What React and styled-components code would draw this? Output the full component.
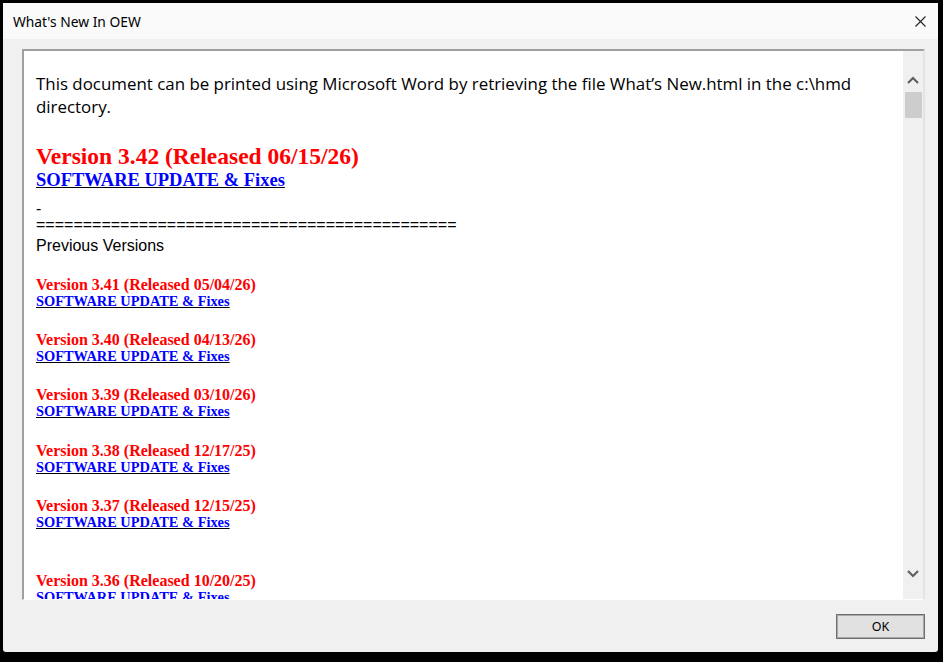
import React from 'react';
import styled, { createGlobalStyle } from 'styled-components';

const GlobalStyle = createGlobalStyle`
  html, body {
    margin: 0;
    padding: 0;
    background: #000;
  }
  #root {
    width: 943px;
    height: 662px;
  }
`;

const Frame = styled.div`
  width: 943px;
  height: 662px;
  box-sizing: border-box;
  padding: 3px 5px 10px 3px;
  background: #000;
  display: flex;
`;

const Window = styled.div`
  flex: 1;
  display: flex;
  flex-direction: column;
  background: #f0f0f0;
  border-radius: 0 0 3px 3px;
  overflow: hidden;
`;

const TitleBar = styled.div`
  height: 36px;
  display: flex;
  align-items: center;
  justify-content: space-between;
  padding: 0 12px 0 10px;
  background: #fafafa;
  font-family: "Noto Sans", "Open Sans", sans-serif;
  font-size: 13.8px;
  color: #000;
`;

const CloseButton = styled.button`
  border: none;
  background: none;
  padding: 0;
  width: 12px;
  height: 12px;
  display: flex;
  align-items: center;
  justify-content: center;
`;

const Body = styled.div`
  flex: 1;
  display: flex;
  flex-direction: column;
  padding: 10px 13px 0 19px;
  min-height: 0;
`;

const Panel = styled.div`
  height: 551px;
  display: flex;
  box-sizing: border-box;
  border-style: solid;
  border-width: 2px 2px 1px 2px;
  border-color: #a0a0a0 #e3e3e3 #fdfdfd #a0a0a0;
  background: #fff;
  overflow: hidden;
`;

const Content = styled.div`
  flex: 1;
  overflow: hidden;
  padding: 21px 12px 0 12px;
`;

const Intro = styled.p`
  margin: 0;
  font-family: "Open Sans", sans-serif;
  font-size: 16.9px;
  line-height: 23px;
  color: #000;
`;

const Version = styled.div`
  font-family: "Liberation Serif", serif;
  font-weight: bold;
  color: #ff0000;
  font-size: ${p => (p.big ? '23.5px' : '16px')};
  line-height: ${p => (p.big ? '26px' : '17px')};
  margin-top: ${p => p.gap}px;
`;

const UpdateLink = styled.a`
  display: block;
  width: fit-content;
  font-family: "Liberation Serif", serif;
  font-weight: bold;
  color: #0000ff;
  text-decoration: underline;
  text-decoration-color: #000;
  font-size: ${p => (p.big ? '18.5px' : '14.4px')};
  line-height: ${p => (p.big ? '22px' : '17px')};
`;

const PlainLine = styled.div`
  font-family: "Liberation Sans", Arial, sans-serif;
  font-size: 16px;
  line-height: ${p => p.lh || 18}px;
  color: #000;
  margin-top: ${p => p.gap || 0}px;
  white-space: nowrap;
`;

const ScrollBar = styled.div`
  width: 20px;
  background: #f0f0f0;
  display: flex;
  flex-direction: column;
  align-items: center;
  padding: 20px 0 17px;
`;

const Arrow = styled.div`
  width: 20px;
  height: 17px;
  display: flex;
  align-items: center;
  justify-content: center;
`;

const Thumb = styled.div`
  width: 17px;
  height: 26px;
  margin-top: 4px;
  background: #cdcdcd;
`;

const Track = styled.div`
  flex: 1;
`;

const Footer = styled.div`
  height: 52px;
  display: flex;
  align-items: center;
  justify-content: flex-end;
`;

const OkButton = styled.button`
  width: 89px;
  height: 25px;
  box-sizing: border-box;
  border: 1px solid #6e6e6e;
  box-shadow: inset 0 0 0 1px #a8a8a8;
  background: #e1e1e1;
  font-family: "Noto Sans", "Open Sans", sans-serif;
  font-size: 12.5px;
  color: #000;
  padding: 0;
`;

const versions = [
  { v: '3.41', d: '05/04/26', gap: 21 },
  { v: '3.40', d: '04/13/26', gap: 21 },
  { v: '3.39', d: '03/10/26', gap: 21 },
  { v: '3.38', d: '12/17/25', gap: 22 },
  { v: '3.37', d: '12/15/25', gap: 21 },
  { v: '3.36', d: '10/20/25', gap: 41 },
];

const Chevron = ({ up }) => (
  <svg width="12" height="8" viewBox="0 0 12 8">
    <path
      d={up ? 'M1 7 L6 2 L11 7' : 'M1 1 L6 6 L11 1'}
      fill="none"
      stroke="#606060"
      strokeWidth="2.2"
    />
  </svg>
);

export default function App() {
  return (
    <>
      <GlobalStyle />
      <Frame>
        <Window>
          <TitleBar>
            <span>What's New In OEW</span>
            <CloseButton aria-label="Close">
              <svg width="11" height="11" viewBox="0 0 11 11">
                <path d="M0.5 0.5 L10.5 10.5 M10.5 0.5 L0.5 10.5" stroke="#222" strokeWidth="1.1" />
              </svg>
            </CloseButton>
          </TitleBar>
          <Body>
            <Panel>
              <Content>
                <Intro>
                  This document can be printed using Microsoft Word by retrieving the file What’s New.html in the c:\hmd directory.
                </Intro>
                <Version big gap={25}>Version 3.42 (Released 06/15/26)</Version>
                <UpdateLink big href="#">SOFTWARE UPDATE &amp; Fixes</UpdateLink>
                <PlainLine gap={11} lh={14}>-</PlainLine>
                <PlainLine lh={17}>=============================================</PlainLine>
                <PlainLine gap={4}>Previous Versions</PlainLine>
                {versions.map(item => (
                  <React.Fragment key={item.v}>
                    <Version gap={item.gap}>Version {item.v} (Released {item.d})</Version>
                    <UpdateLink href="#">SOFTWARE UPDATE &amp; Fixes</UpdateLink>
                  </React.Fragment>
                ))}
              </Content>
              <ScrollBar>
                <Arrow><Chevron up /></Arrow>
                <Thumb />
                <Track />
                <Arrow><Chevron /></Arrow>
              </ScrollBar>
            </Panel>
            <Footer>
              <OkButton>OK</OkButton>
            </Footer>
          </Body>
        </Window>
      </Frame>
    </>
  );
}
